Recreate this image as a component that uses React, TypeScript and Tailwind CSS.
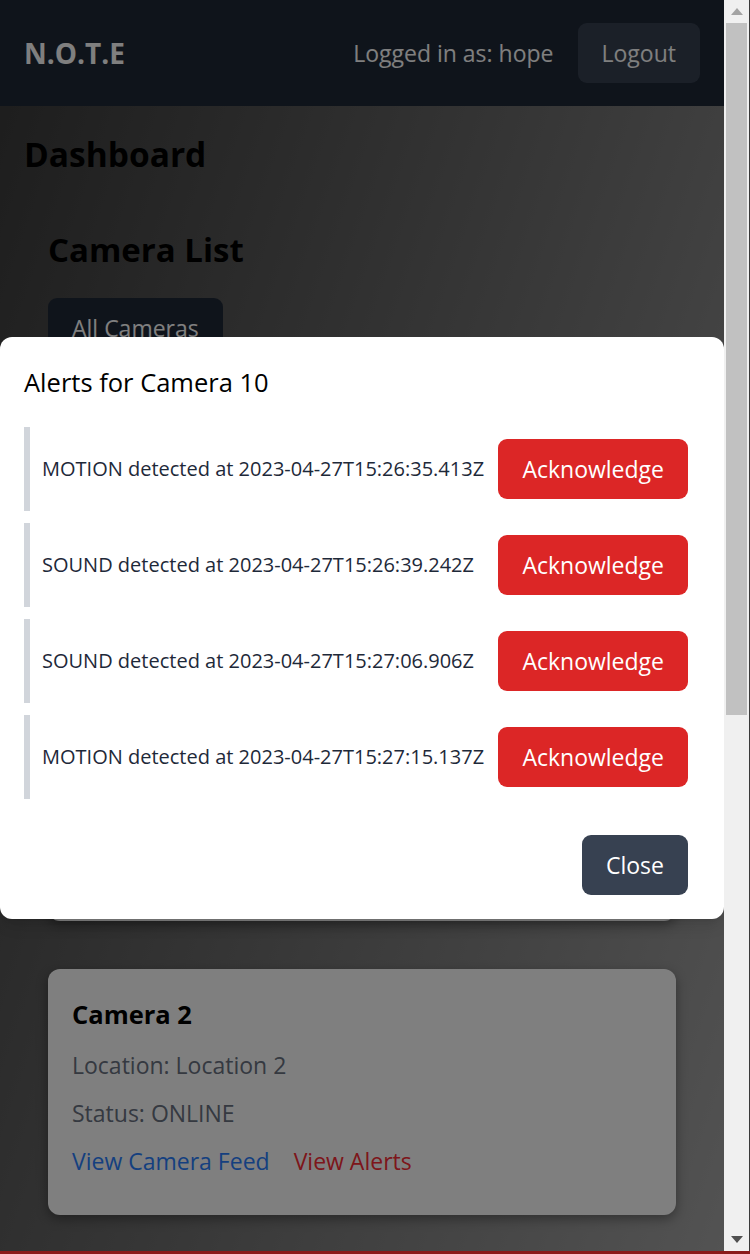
import React from "react";

const alerts = [
  "MOTION detected at 2023-04-27T15:26:35.413Z",
  "SOUND detected at 2023-04-27T15:26:39.242Z",
  "SOUND detected at 2023-04-27T15:27:06.906Z",
  "MOTION detected at 2023-04-27T15:27:15.137Z",
];

function CameraCard({ name, location, status, extra }: { name: string; location: string; status: string; extra?: boolean }) {
  return (
    <div className={`bg-white rounded-[12px] shadow-[0_4px_12px_rgba(0,0,0,0.35)] p-6 ${extra ? "h-[539px]" : ""}`}>
      <h3 className="text-[25.5px] leading-[42px] font-bold text-black mb-3">{name}</h3>
      <p className="text-[23px] leading-[36px] text-gray-500 mb-3">Location: {location}</p>
      <p className="text-[23px] leading-[36px] text-gray-500 mb-3">Status: {status}</p>
      <div className="flex items-center gap-6 text-[23px] leading-[36px] mb-3">
        <span className="text-blue-500">View Camera Feed</span>
        <span className="text-red-500">View Alerts</span>
      </div>
    </div>
  );
}

export default function App() {
  return (
    <div
      className="w-[750px] h-[1254px] overflow-hidden flex flex-col"
      style={{ fontFamily: '"Open Sans", "Noto Sans", sans-serif' }}
    >
      <div className="flex h-[1251px]">
        <div className="relative w-[724px] h-full overflow-hidden">
          <header className="h-[106px] bg-[#1f2937] flex items-center justify-between px-6">
            <span className="text-white font-bold text-[28px] leading-[42px]">N.O.T.E</span>
            <div className="flex items-center gap-6">
              <span className="text-white text-[23px] leading-[36px]">Logged in as: hope</span>
              <button className="bg-[#374151] text-white text-[23px] leading-[36px] px-6 py-3 rounded-[9px]">Logout</button>
            </div>
          </header>
          <main className="h-[2082px] bg-linear-to-br from-[#3c3c3c] to-[#c8c8c8] p-6">
            <h1 className="text-[33.5px] leading-[48px] font-bold text-black">Dashboard</h1>
            <section className="mt-6 p-6">
              <h2 className="text-[33px] leading-[48px] font-bold text-black mb-6">Camera List</h2>
              <button className="bg-[#1f2937] text-white text-[23px] leading-[36px] px-6 py-3 rounded-[9px] mb-6">All Cameras</button>
              <div className="flex flex-col gap-12">
                <CameraCard name="Camera 10" location="Location 10" status="ONLINE" extra />
                <CameraCard name="Camera 2" location="Location 2" status="ONLINE" />
              </div>
            </section>
          </main>
          <div className="absolute inset-0 bg-black/50 flex items-center justify-center pt-1">
            <div className="w-full bg-white rounded-[12px] p-6 shadow-lg flex flex-col">
              <h2 className="text-[25.5px] leading-[42px] font-medium text-black mb-6">Alerts for Camera 10</h2>
              <div className="flex flex-col gap-3">
                {alerts.map((a, i) => (
                  <div key={i} className="flex items-center justify-between border-l-[6px] border-[#d1d5db] pl-3 pr-3 py-3">
                    <span className="text-[20px] leading-[30px] text-gray-800">{a}</span>
                    <button className="bg-[#dc2626] text-white text-[23px] leading-[36px] px-6 py-3 rounded-[9px]">Acknowledge</button>
                  </div>
                ))}
              </div>
              <div className="flex justify-end pr-3 mt-[36px]">
                <button className="bg-[#374151] text-white text-[23px] leading-[36px] px-6 py-3 rounded-[9px]">Close</button>
              </div>
            </div>
          </div>
        </div>
        <div className="w-[26px] h-full bg-[#f0f0f0] flex flex-col border-r border-[#3a3a3a]">
          <div className="h-[23px] flex items-center justify-center">
            <svg width="12" height="7" viewBox="0 0 12 7"><path d="M6 0 L12 7 L0 7 Z" fill="#a3a3a3" /></svg>
          </div>
          <div className="ml-[2px] w-[21px] h-[692px] bg-[#c1c1c1]" />
          <div className="flex-1" />
          <div className="h-[23px] flex items-center justify-center">
            <svg width="12" height="7" viewBox="0 0 12 7"><path d="M0 0 L12 0 L6 7 Z" fill="#505050" /></svg>
          </div>
        </div>
      </div>
      <div className="h-[3px] bg-[#8b1a1a]" />
    </div>
  );
}
